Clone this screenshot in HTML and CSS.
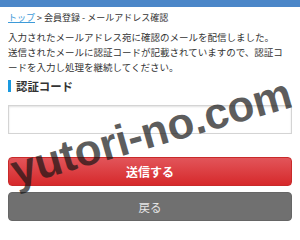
FILE: index.html
```html
<!DOCTYPE html>
<html lang="ja">
<head>
<meta charset="utf-8">
<link rel="stylesheet" href="styles.css">
</head>
<body>
<div class="topbar"></div>
<main class="page">
  <nav class="crumbs"><a href="#" class="crumb-link">トップ</a> &gt; 会員登録 - メールアドレス確認</nav>
  <p class="intro">入力されたメールアドレス宛に確認のメールを配信しました。<br>送信されたメールに認証コードが記載されていますので、認証コードを入力し処理を継続してください。</p>
  <h2 class="label">認証コード</h2>
  <input class="code-input" type="text">
  <button class="btn btn-send">送信する</button>
  <button class="btn btn-back">戻る</button>
</main>
<div class="watermark">yutori-no.com</div>
</body>
</html>
```
FILE: styles.css
```css
html, body {
  margin: 0;
  padding: 0;
  background: #fff;
}
body {
  width: 300px;
  height: 240px;
  overflow: hidden;
  position: relative;
  font-family: "Noto Sans CJK JP", "Noto Sans", sans-serif;
  color: #333;
}
.topbar {
  height: 7px;
  background: #4b86c8;
}
.page {
  padding: 0 8px;
  display: flex;
  flex-direction: column;
}
.crumbs {
  font-size: 9px;
  line-height: 12px;
  margin-top: 5px;
  color: #333;
}
.crumb-link {
  color: #3d9ad8;
  text-decoration: underline;
}
.intro {
  margin: 6px 0 0;
  font-size: 9.5px;
  line-height: 15px;
  color: #333;
}
.label {
  margin: 5px 0 0;
  font-size: 11.4px;
  line-height: 12px;
  font-weight: bold;
  color: #333;
  border-left: 3px solid #1a9ae0;
  padding-left: 5px;
}
.code-input {
  margin: 13px 0 0;
  height: 29px;
  box-sizing: border-box;
  border: 1px solid #d4d4d4;
  box-shadow: inset 0 1px 2px rgba(0,0,0,0.12);
  background: #fff;
  padding: 0 6px;
  width: 100%;
}
.btn {
  width: 100%;
  height: 29px;
  box-sizing: border-box;
  border-radius: 4px;
  font-family: "Noto Sans CJK JP", sans-serif;
  font-size: 12px;
  color: #fff;
  padding: 0;
}
.btn-send {
  margin-top: 23px;
  font-weight: bold;
  border: 1px solid #c82a2a;
  background: linear-gradient(#e2555a, #d6292b);
}
.btn-back {
  margin-top: 6px;
  border: 1px solid #666;
  background: #707070;
  color: #e6e6e6;
  font-size: 11.5px;
}
.watermark {
  position: absolute;
  left: 151px;
  top: 132px;
  transform: translate(-50%, -50%) rotate(-16deg);
  font-family: "Liberation Sans", Arial, sans-serif;
  font-weight: bold;
  font-size: 44px;
  line-height: 1;
  letter-spacing: -0.3px;
  white-space: nowrap;
  color: rgba(20, 20, 20, 0.7);
  pointer-events: none;
}
```
